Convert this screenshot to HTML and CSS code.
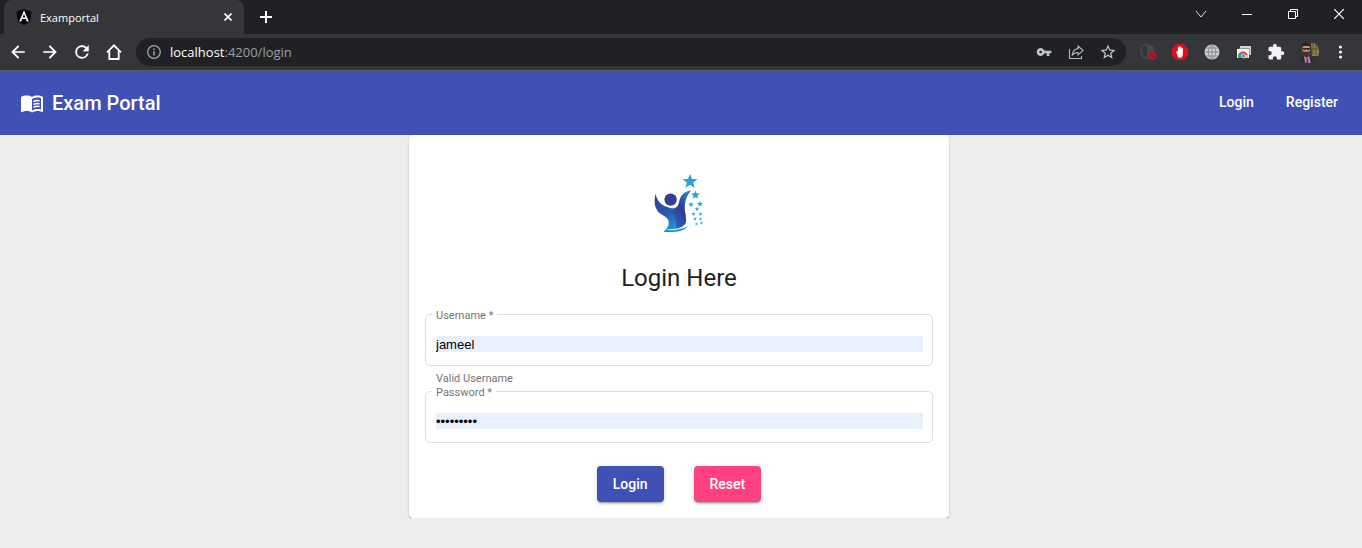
FILE: index.html
```html
<!DOCTYPE html>
<html lang="en">
<head>
<meta charset="utf-8">
<title>Examportal</title>
<link rel="stylesheet" href="styles.css">
</head>
<body>
<div class="browser">
  <div class="tabstrip">
    <div class="tab">
      <svg class="favicon" width="16" height="16" viewBox="0 0 16 16"><path d="M8 0l7.4 2.6-1.1 9.8L8 16l-6.3-3.6L.6 2.6z" fill="#07090b"/><path d="M8 1.500L3.200 12.500h2l.9-2.500h3.800l.9 2.500h2zM8 5l1.400 3.500H6.600z" fill="#fff" fill-rule="evenodd"/></svg>
      <span class="tab-title">Examportal</span>
      <button class="tab-close" aria-label="Close tab"><svg width="8" height="8" viewBox="0 0 8 8"><path d="M.5.5l7 7m0-7l-7 7" stroke="#fff" stroke-width="1.6"/></svg></button>
    </div>
    <button class="new-tab" aria-label="New tab"><svg width="12" height="12" viewBox="0 0 12 12"><path d="M6 0v12M0 6h12" stroke="#fff" stroke-width="2"/></svg></button>
    <div class="window-controls">
      <button class="window-button" aria-label="Search tabs"><svg width="12" height="12" viewBox="0 0 12 12"><path d="M1 3l5 6 5-6" fill="none" stroke="#ddd"/></svg></button>
      <button class="window-button" aria-label="Minimize"><svg width="10" height="10" viewBox="0 0 10 10"><path d="M0 5.500h10" stroke="#fff"/></svg></button>
      <button class="window-button" aria-label="Restore"><svg width="10" height="10" viewBox="0 0 10 10"><path d="M.5 2.500h7v7h-7zM2.500 2.500v-2h7v7h-2" fill="none" stroke="#fff"/></svg></button>
      <button class="window-button" aria-label="Close window"><svg width="10" height="10" viewBox="0 0 10 10"><path d="M0 0l10 10M10 0L0 10" stroke="#fff" stroke-width="1.200"/></svg></button>
    </div>
  </div>
  <div class="toolbar">
    <button class="tool" aria-label="Back"><svg width="20" height="20" viewBox="0 0 24 24"><path d="M20 11H7.830l5.590-5.590L12 4l-8 8 8 8 1.410-1.410L7.830 13H20z" fill="#fff" stroke="#fff" stroke-width=".2"/></svg></button>
    <button class="tool" aria-label="Forward"><svg width="20" height="20" viewBox="0 0 24 24"><path d="M4 11h12.170l-5.590-5.590L12 4l8 8-8 8-1.410-1.410L16.170 13H4z" fill="#fff" stroke="#fff" stroke-width=".2"/></svg></button>
    <button class="tool" aria-label="Reload"><svg width="20" height="20" viewBox="0 0 24 24"><path d="M17.650 6.350A7.960 7.960 0 0 0 12 4a8 8 0 1 0 7.730 10h-2.080A6 6 0 1 1 12 6c1.660 0 3.140.69 4.220 1.780L13 11h7V4z" fill="#fff" stroke="#fff" stroke-width=".3"/></svg></button>
    <button class="tool" aria-label="Home"><svg width="18" height="18" viewBox="0 0 18 18"><path d="M2 9.300L9 2.300l7 7M4.300 8v8h9.400V8" fill="none" stroke="#fff" stroke-width="1.800"/></svg></button>
    <div class="omnibox">
      <button class="tool" aria-label="Site information"><svg width="16" height="16" viewBox="0 0 16 16"><circle cx="8" cy="8" r="6.300" fill="none" stroke="#a2a5a9" stroke-width="1.300"/><path d="M8 7.200v4.300M8 4.500v1.500" stroke="#a2a5a9" stroke-width="1.500"/></svg></button>
      <div class="address"><span class="host">localhost</span>:4200/login</div>
      <button class="tool" aria-label="Saved password"><svg width="16" height="16" viewBox="0 0 24 24"><path d="M12.650 10A6 6 0 1 0 12.650 14H16v4h4v-4h3v-4zM7 14a2 2 0 1 1 0-4 2 2 0 0 1 0 4z" fill="#c4c7ca"/></svg></button>
      <button class="tool" aria-label="Share"><svg width="16" height="16" viewBox="0 0 16 16"><path d="M1.500 5v9.500h12V12M10 2l5 4.500-5 4.300V8.500C7 8.500 5.300 9.500 4 11.500 4.500 7.500 6.500 5 10 4.600z" fill="none" stroke="#b4b7ba" stroke-width="1.100"/></svg></button>
      <button class="tool" aria-label="Bookmark"><svg width="18" height="18" viewBox="0 0 24 24"><path d="M22 9.240l-7.190-.62L12 2 9.190 8.630 2 9.240l5.460 4.730L5.820 21 12 17.270 18.180 21l-1.630-7.030zM12 15.400l-3.760 2.270 1-4.280-3.320-2.880 4.380-.38L12 6.100l1.710 4.040 4.380.38-3.320 2.880 1 4.280z" fill="#c4c7ca"/></svg></button>
    </div>
    <div class="extensions">
      <button class="tool" aria-label="Shield"><svg width="18" height="18" viewBox="0 0 18 18"><path d="M8 1.500l6 2v5c0 3.800-3 6-6 7.500-3-1.500-6-3.700-6-7.500v-5z" fill="none" stroke="#4a4c4f" stroke-width="1.200"/><path d="M8 1.500l6 2v5c0 3.800-3 6-6 7.500z" fill="#46484b"/><circle cx="13.500" cy="13" r="4" fill="#b01824"/><path d="M11.500 11l4 4" stroke="#69222a" stroke-width="1.200"/></svg></button>
      <button class="tool" aria-label="Ad blocker"><svg width="18" height="18" viewBox="0 0 18 18"><path d="M5.700 1h6.600L17 5.700v6.600L12.300 17H5.700L1 12.300V5.700z" fill="#e20b16"/><path d="M5.200 8.200c.8-.3 1.300.2 1.700 1V4.700c0-1 1.200-1 1.200 0V3.800c0-1 1.300-1 1.300 0v.6c0-1 1.300-1 1.300 0v1.200c0-.9 1.200-.9 1.200 0V11c0 2.500-1.200 3.800-3 3.800-2 0-2.500-1.500-3.700-6.600z" fill="#fff"/></svg></button>
      <button class="tool" aria-label="Web translator"><svg width="16" height="16" viewBox="0 0 16 16"><circle cx="8" cy="8" r="7.500" fill="#d0d2d3"/><path d="M8 .5v15M.5 8h15M2 4h12M2 12h12M8 .5C3 5 3 11 8 15.500M8 .5c5 4.500 5 10.500 0 15" fill="none" stroke="#74787b" stroke-width=".8"/></svg></button>
      <button class="tool" aria-label="Remote desktop"><svg width="16" height="16" viewBox="0 0 16 16"><path d="M4 2h11v9H4z" fill="#d4d6d7"/><path d="M3 4.500h10.500V11" fill="none" stroke="#85898d" stroke-width=".8"/><path d="M1 5h12v9H1z" fill="#f3f4f4"/><path d="M2.500 14a5 5 0 0 1 1.200-5.500L8 14z" fill="#22a565"/><path d="M3.200 9.300a5 5 0 0 1 8.600 1.700H7z" fill="#e64235"/><path d="M11.800 11c.4 1 .3 2-.1 3H7l1-3z" fill="#f7c22d"/><circle cx="7.400" cy="12" r="2" fill="#3f83ed" stroke="#fff" stroke-width=".6"/></svg></button>
      <button class="tool" aria-label="Extensions"><svg width="18" height="18" viewBox="0 0 24 24"><path d="M20.500 11H19V7a2 2 0 0 0-2-2h-4V3.500a2.500 2.500 0 0 0-5 0V5H4a2 2 0 0 0-2 2v3.800h1.500a2.700 2.700 0 0 1 0 5.400H2V20c0 1.100.9 2 2 2h3.800v-1.500a2.700 2.700 0 0 1 5.400 0V22H17a2 2 0 0 0 2-2v-4h1.500a2.500 2.500 0 0 0 0-5z" fill="#f1f3f4"/></svg></button>
      <button class="tool" aria-label="Profile"><svg class="avatar" width="22" height="22" viewBox="0 0 22 22"><path d="M0 0h22v22H0z" fill="#363431"/><path d="M14 2h8v13h-7z" fill="#8f8052"/><path d="M16 2v12M19 3v11M14 8h8" stroke="#5b5036"/><path d="M3 22c0-5 3-7 6-7s7 2 7 7z" fill="#292933"/><path d="M7 15l2.500 1.500L12 15l2 7H8z" fill="#b785ad"/><path d="M9.500 16.500h1.200l.6 5.500H9.600z" fill="#51334e"/><path d="M5.500 5.500c0-3 7.500-3 7.500 0V10c0 3-1 5-3.700 5s-3.800-2-3.800-5z" fill="#c99376"/><path d="M5 6.500C4 .5 13 .5 13.500 5.500v1.500L12 5H6.500z" fill="#30211d"/><path d="M5.500 7.500h7.500M6.500 7v1.500H8.500V7M10 7v1.500h2V7" fill="none" stroke="#292120" stroke-width=".9"/><path d="M5.500 10l2 .8h3.600l1.900-.8c0 4-1.500 5.500-3.700 5.500S5.500 14 5.500 10z" fill="#4a3029"/></svg></button>
      <button class="tool" aria-label="Menu"><svg width="16" height="16" viewBox="0 0 16 16"><g fill="#f1f3f4"><circle cx="8.500" cy="3" r="1.600"/><circle cx="8.500" cy="8" r="1.600"/><circle cx="8.500" cy="13" r="1.600"/></g></svg></button>
    </div>
  </div>
</div>

<header class="navbar">
  <a class="brand" href="#"><svg width="24" height="24" viewBox="0 0 24 24"><path d="M21 5c-1.110-.35-2.330-.5-3.500-.5-1.950 0-4.050.4-5.500 1.500-1.450-1.100-3.550-1.500-5.500-1.500S2.450 4.900 1 6v14.650c0 .25.25.5.5.5.1 0 .15-.05.25-.05C3.100 20.450 5.050 20 6.500 20c1.950 0 4.050.4 5.500 1.500 1.350-.85 3.800-1.500 5.500-1.500 1.650 0 3.350.3 4.750 1.050.1.050.15.050.25.050.25 0 .5-.25.5-.5V6c-.6-.45-1.250-.75-2-1zm0 13.500c-1.100-.35-2.300-.5-3.500-.5-1.700 0-4.150.65-5.500 1.500V8c1.350-.85 3.800-1.500 5.500-1.500 1.200 0 2.400.15 3.500.5z" fill="#fff"/><path d="M13.500 10.600c1.700-.9 3.900-1.200 6-.8M13.500 13.500c1.700-.9 3.900-1.200 6-.8M13.500 16.300c1.700-.9 3.900-1.200 6-.8" fill="none" stroke="#fff" stroke-width="1.500"/></svg><span>Exam Portal</span></a>
  <nav class="nav-links">
    <a class="nav-link" href="#login">Login</a>
    <a class="nav-link" href="#register">Register</a>
  </nav>
</header>

<main class="page">
  <section class="card">
    <svg class="logo" width="80" height="80" viewBox="-1 1 80 80">
      <defs>
        <linearGradient id="figure" x1=".2" y1="0" x2=".6" y2="1"><stop offset="0" stop-color="#2e3f98"/><stop offset=".5" stop-color="#2858af"/><stop offset="1" stop-color="#229bd6"/></linearGradient>
        <linearGradient id="arm" x1="1" y1="0" x2="0" y2="1"><stop offset="0" stop-color="#2b92cc"/><stop offset=".45" stop-color="#303e99"/><stop offset="1" stop-color="#2674bf"/></linearGradient>
        <path id="star" d="M0-10l2.500 6.700 7.200.3-5.700 4.400L6 8.200 0 4.300-6 8.200l2-6.800L-9.700-3l7.200-.3z"/>
      </defs>
      <path d="M15.500 29c-2 9-.5 15 4 19 4 3 8 4 9 8 1 4-1 7-4 10 6-1 11 0 15-3 6-3 7-8 6-15l-5-5c-3 1-9 1-13-1-7-2-10-6-12-13z" fill="url(#figure)"/>
      <path d="M51 25.500c-8 1-11 6-12 12-1 5-5 7-11 6.500 6 4 9 10 8 19 6 0 11-3 10-9-2-12-2-20 5-28.500z" fill="url(#arm)"/>
      <circle cx="30.600" cy="34.600" r="6.200" fill="#303f96"/>
      <path d="M24 66c8-4 15 1 24-5-5 7-15 6-24 6z" fill="#238fcd"/>
      <path d="M27 64c7 0 14 0 18-5-2 5-8 7-17 6z" fill="#bce1f1"/>
      <g fill="#2aa0da">
        <use href="#star" transform="translate(50 16.500) scale(.78)"/>
        <use href="#star" transform="translate(55.500 30) scale(.46)"/>
        <use href="#star" transform="translate(60 39) scale(.31)"/>
        <use href="#star" transform="translate(51 39.500) scale(.28)"/>
        <use href="#star" transform="translate(57 44) scale(.24)"/>
        <use href="#star" transform="translate(53.500 49) scale(.21)"/>
        <use href="#star" transform="translate(60.500 49) scale(.21)"/>
        <use href="#star" transform="translate(55 54) scale(.19)"/>
        <use href="#star" transform="translate(60.500 54) scale(.17)"/>
        <use href="#star" transform="translate(56.500 59) scale(.17)"/>
        <use href="#star" transform="translate(61.500 58) scale(.17)"/>
      </g>
    </svg>
    <h1 class="title">Login Here</h1>
    <form class="form">
      <div class="field">
        <label class="field-label" for="username">Username *</label>
        <input class="field-input" id="username" type="text" value="jameel" aria-describedby="username-hint">
      </div>
      <div class="hint" id="username-hint">Valid Username</div>
      <div class="field">
        <label class="field-label" for="password">Password *</label>
        <input class="field-input" id="password" type="password" value="secret123">
      </div>
      <div class="actions">
        <button class="button primary" type="submit">Login</button>
        <button class="button accent" type="reset">Reset</button>
      </div>
    </form>
  </section>
</main>
</body>
</html>
```
FILE: styles.css
```css
* { box-sizing: border-box; }
body {
  margin: 0;
  background: #ededed;
  font-family: Roboto, "Liberation Sans", sans-serif;
}
button {
  margin: 0;
  padding: 0;
  border: 0;
  background: none;
  font: inherit;
}
a { color: inherit; text-decoration: none; }
svg { display: block; flex: none; }

.browser {
  background: #35363a;
  border-bottom: 1px solid #5b5c6a;
  font-family: "Open Sans", "Noto Sans", sans-serif;
}
.tabstrip {
  display: flex;
  height: 34px;
  padding-left: 4px;
  background: #202124;
}
.tab {
  display: flex;
  align-items: center;
  width: 240px;
  padding: 0 12px;
  gap: 8px;
  border-radius: 8px 8px 0 0;
  background: #35363a;
  color: #fff;
  font-size: 11px;
}
.tab-title { flex: 1; }
.new-tab {
  display: grid;
  place-items: center;
  width: 28px;
  margin-left: 8px;
}
.window-controls { display: flex; height: 28px; margin-left: auto; }
.window-button { display: grid; place-items: center; width: 46px; }
.toolbar {
  display: flex;
  align-items: center;
  height: 36px;
  padding: 0 6px 0 2px;
}
.tool { display: grid; place-items: center; width: 32px; height: 28px; }
.omnibox {
  display: flex;
  flex: 1;
  align-items: center;
  height: 28px;
  margin: 0 6px;
  padding: 0 2px;
  border-radius: 14px;
  background: #202124;
}
.address { flex: 1; color: #9aa0a6; font-size: 13px; }
.host { color: #fff; }
.extensions { display: flex; }
.avatar { border-radius: 50%; }

.navbar {
  display: flex;
  align-items: center;
  justify-content: space-between;
  height: 64px;
  padding: 0 8px 0 20px;
  background: #3f51b5;
  color: #fff;
}
.brand {
  display: flex;
  align-items: center;
  gap: 8px;
  font-size: 20px;
  font-weight: 500;
}
.nav-links { display: flex; }
.nav-link {
  padding: 0 16px 2px;
  font-size: 14px;
  font-weight: 500;
  line-height: 36px;
}

.page {
  display: grid;
  grid-template-columns: 409fr 540fr 413fr;
}
.card {
  grid-column: 2;
  padding: 31px 16px 16px;
  border-radius: 4px;
  background: #fff;
  box-shadow: 0 2px 1px -1px rgba(0, 0, 0, .3), 0 1px 1px rgba(0, 0, 0, .24), 0 1px 3px rgba(0, 0, 0, .12);
}
.logo { margin: 0 auto; }
.title {
  margin: 16px 0 20px;
  color: #212121;
  font-size: 24px;
  font-weight: 400;
  line-height: 32px;
  text-align: center;
}
.field {
  position: relative;
  height: 52px;
  padding: 21px 9px 0 10px;
  border: 1px solid #dedede;
  border-radius: 5px;
}
.field-label {
  position: absolute;
  top: -7px;
  left: 6px;
  padding: 0 4px;
  background: #fff;
  color: #757575;
  font-size: 11px;
  line-height: 16px;
}
.field-input {
  display: block;
  width: 100%;
  height: 16px;
  padding: 0;
  border: 0;
  outline: 0;
  background: #e8f0fe;
  color: #000;
  font: 13px "Liberation Sans", sans-serif;
}
.hint {
  padding: 5px 11px 4px;
  color: #757575;
  font-size: 11px;
  line-height: 16px;
}
.actions {
  display: flex;
  justify-content: center;
  gap: 30px;
  margin-top: 23px;
}
.button {
  padding: 0 16px;
  border-radius: 4px;
  box-shadow: 0 3px 1px -2px rgba(0, 0, 0, .2), 0 2px 2px rgba(0, 0, 0, .14), 0 1px 5px rgba(0, 0, 0, .12);
  color: #fff;
  font-size: 14px;
  font-weight: 500;
  line-height: 36px;
}
.primary { background: #3f51b5; }
.accent { background: #ff4081; }
```
